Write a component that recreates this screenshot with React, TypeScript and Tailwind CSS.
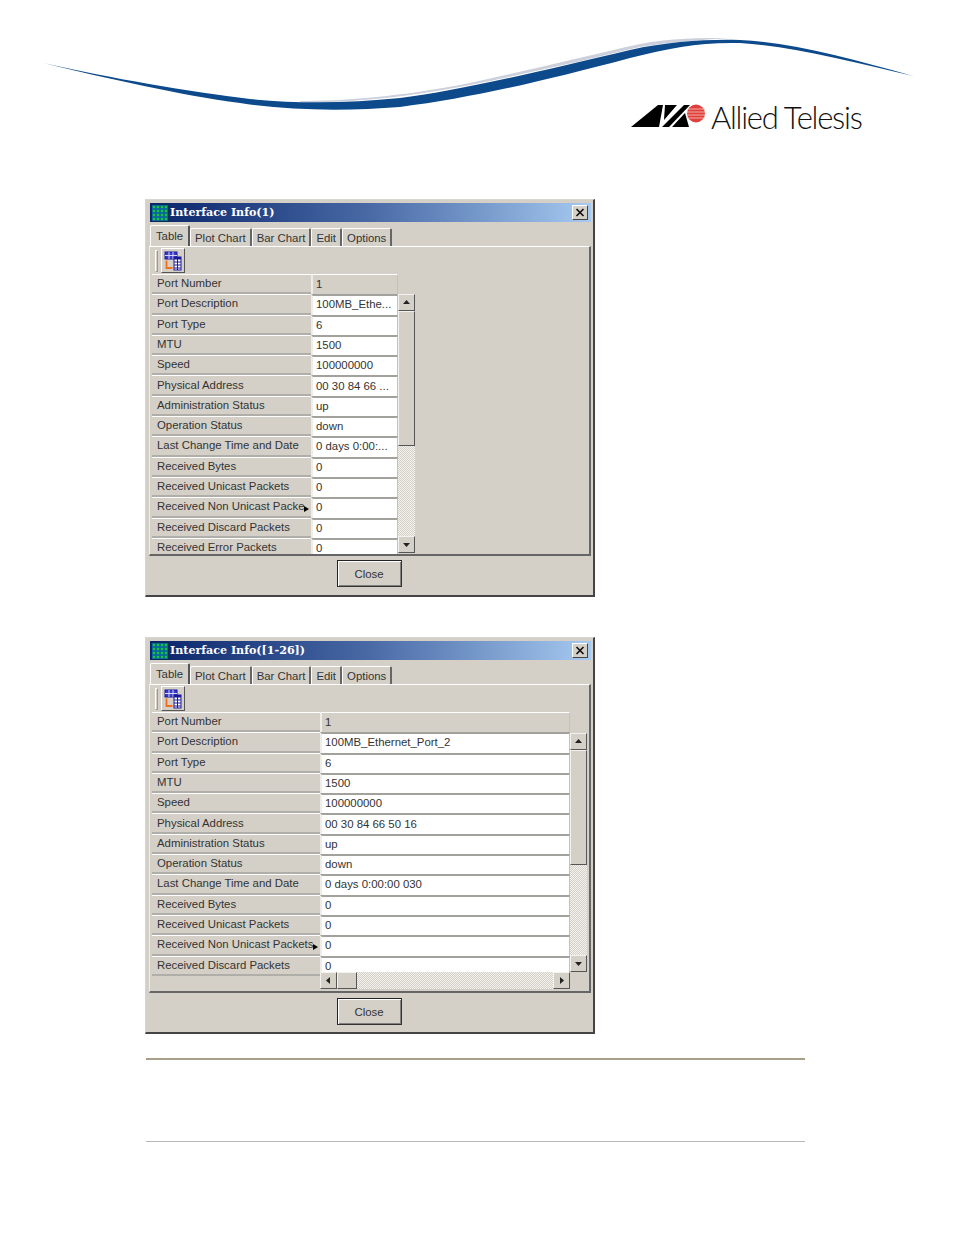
import React from "react";

const rows: [string, string, string][] = [
  ["Port Number", "1", "1"],
  ["Port Description", "100MB_Ethe...", "100MB_Ethernet_Port_2"],
  ["Port Type", "6", "6"],
  ["MTU", "1500", "1500"],
  ["Speed", "100000000", "100000000"],
  ["Physical Address", "00 30 84 66 ...", "00 30 84 66 50 16"],
  ["Administration Status", "up", "up"],
  ["Operation Status", "down", "down"],
  ["Last Change Time and Date", "0 days 0:00:...", "0 days 0:00:00 030"],
  ["Received Bytes", "0", "0"],
  ["Received Unicast Packets", "0", "0"],
  ["Received Non Unicast Packe", "0", "0"],
  ["Received Discard Packets", "0", "0"],
  ["Received Error Packets", "0", "0"],
];

function GridIcon() {
  return (
    <svg width="18" height="18" viewBox="0 0 18 18" className="shrink-0">
      <rect width="18" height="18" fill="#0b5fc4" />
      {[2, 6, 10, 14].map((v) => (
        <g key={v}>
          <rect x={v} y="0" width="2" height="18" fill="#0a7a66" />
          <rect x="0" y={v} width="18" height="2" fill="#0a7a66" />
        </g>
      ))}
      {[2, 6, 10, 14].map((a) =>
        [2, 6, 10, 14].map((b) => <rect key={`${a}-${b}`} x={a} y={b} width="2" height="2" fill="#16c060" />)
      )}
      <rect x="0.5" y="0.5" width="17" height="17" fill="none" stroke="#0a2a5a" />
    </svg>
  );
}

function TableIcon() {
  return (
    <svg width="18" height="20" viewBox="0 0 18 20">
      <rect x="1" y="1" width="12" height="7" fill="#3a3ac8" stroke="#1a1a9a" />
      <path d="M1 4.5h12M5 1v7M9 1v7" stroke="#d8d8f4" />
      <rect x="10" y="6" width="7" height="13" fill="#fff" stroke="#1a1a9a" />
      <rect x="10" y="6" width="7" height="2.5" fill="#1a1a9a" />
      <path d="M10 11h7M10 14h7M10 17h7M13.5 6v13" stroke="#1a1a9a" />
      <path d="M2.5 9.5v7.5h6" fill="none" stroke="#f07020" strokeWidth="1.8" />
    </svg>
  );
}

function ArrowBox({ dir }: { dir: "up" | "down" | "left" | "right" }) {
  const path = { up: "M4 7l3.5-4 3.5 4z", down: "M4 4l3.5 4 3.5-4z", left: "M9 2v7l-4-3.5z", right: "M6 2v7l4-3.5z" }[dir];
  return (
    <div className="w-[17px] h-[17px] shrink-0 bg-[#d4d0c8] border border-t-[#f4f2ee] border-l-[#f4f2ee] border-r-[#555] border-b-[#555] flex items-center justify-center">
      <svg width="15" height="11" viewBox="0 0 15 11"><path d={path} fill="#222" /></svg>
    </div>
  );
}

const dither = "bg-[repeating-conic-gradient(#f3f2ee_0%_25%,#d4d0c8_0%_50%)] bg-[length:2px_2px]";
const thumb = "bg-[#d4d0c8] border border-t-[#f4f2ee] border-l-[#f4f2ee] border-r-[#555] border-b-[#555]";

function Tab({ label, active }: { label: string; active?: boolean }) {
  return active ? (
    <div className="h-[21px] w-[40px] flex items-center justify-center border-l border-t border-white border-r-2 border-r-[#555] text-[#333] rounded-t-[2px] pt-[1px]">
      {label}
    </div>
  ) : (
    <div className="h-[18px] px-[4px] flex items-center border-l border-t border-white border-r-2 border-r-[#666] text-[#333] whitespace-nowrap rounded-t-[2px] pt-[2px]">
      {label}
    </div>
  );
}

function Row({ label, value, first, labelW, valueW, arrow }: { label: string; value: string; first?: boolean; labelW: string; valueW: string; arrow?: boolean }) {
  return (
    <div className="flex shrink-0 h-[20.3px]">
      <div className={`relative ${labelW} shrink-0 border-t border-white border-b-2 border-b-[#b0aea8] pl-[5px] flex items-center text-[#333] whitespace-nowrap overflow-hidden`}>
        {label}
        {arrow && <span className="absolute right-[2px] bottom-[4px] w-0 h-0 border-y-[3px] border-y-transparent border-l-[5px] border-l-black" />}
      </div>
      <div className={`${valueW} shrink-0 ${first ? "bg-[#d4d0c8] border-t border-t-white" : "bg-white border-t-2 border-t-[#a3a19c] pb-[1px]"} border-l-2 border-l-[#efede8] border-r border-r-[#c4c2bc] pl-[3px] flex items-center text-[#333] whitespace-nowrap overflow-hidden`}>
        {value}
      </div>
    </div>
  );
}

function Dialog({ title, wide }: { title: string; wide?: boolean }) {
  const data = wide
    ? rows.slice(0, 13).map((r, i) => [i === 11 ? "Received Non Unicast Packets" : r[0], r[2]])
    : rows.map((r) => [r[0], r[1]]);
  return (
    <div className={`w-[450px] ${wide ? "h-[397px]" : "h-[398px]"} bg-[#d4d0c8] border border-[#d8d6d0] border-r-2 border-r-[#444] border-b-2 border-b-[#444] pl-[3px] pt-[3px] pr-[2px] pb-[3px] flex flex-col text-[11.4px] font-['Liberation_Sans',Arial,sans-serif]`}>
      <div className="h-[19px] shrink-0 ml-[1px] bg-gradient-to-r from-[#0a246a] via-[#4a6aa6] to-[#a6caf0] flex items-center pl-[1px] pr-[3px]">
        <GridIcon />
        <span className="ml-[1px] pt-[1px] text-white font-bold text-[11.1px] font-['DejaVu_Serif',serif] whitespace-nowrap">{title}</span>
        <div className="ml-auto w-[16px] h-[15px] bg-[#d4d0c8] border border-t-white border-l-white border-r-[#444] border-b-[#444] flex items-center justify-center">
          <svg width="10" height="9" viewBox="0 0 10 9"><path d="M1.5 1l7 7M8.5 1l-7 7" stroke="#111" strokeWidth="1.7" /></svg>
        </div>
      </div>
      <div className="h-[24px] shrink-0 flex items-end pl-[1px]">
        <Tab label="Table" active />
        <Tab label="Plot Chart" />
        <Tab label="Bar Chart" />
        <Tab label="Edit" />
        <Tab label="Options" />
      </div>
      <div className="flex-1 min-h-0 flex flex-col border-t border-white border-r-2 border-r-[#666] border-b-2 border-b-[#666] border-l border-l-[#efede8] pl-[2px]">
        <div className="h-[27px] shrink-0 flex items-center pl-[3px]">
          <div className="w-[3px] h-[22px] border border-[#999] border-l-white border-t-white mr-[3px]" />
          <div className="w-[24px] h-[25px] border border-t-white border-l-white border-r-[#555] border-b-[#555] flex items-center justify-center">
            <TableIcon />
          </div>
        </div>
        {wide ? (
          <div className="relative h-[279px] overflow-hidden">
            {data.map((r, i) => (
              <Row key={r[0]} label={r[0]} value={r[1]} first={i === 0} labelW="w-[168px]" valueW="w-[250px]" arrow={i === 11} />
            ))}
            <div className="absolute left-[418px] top-[21px] w-[17px] h-[239px] flex flex-col">
              <ArrowBox dir="up" />
              <div className={`h-[115px] ${thumb}`} />
              <div className={`flex-1 ${dither}`} />
              <ArrowBox dir="down" />
            </div>
            <div className="absolute left-[168px] top-[260px] w-[250px] h-[17px] flex">
              <ArrowBox dir="left" />
              <div className={`w-[20px] h-[17px] ${thumb}`} />
              <div className={`flex-1 ${dither}`} />
              <ArrowBox dir="right" />
            </div>
          </div>
        ) : (
          <div className="relative h-[280px] overflow-hidden">
            {data.map((r, i) => (
              <Row key={r[0]} label={r[0]} value={r[1]} first={i === 0} labelW="w-[159px]" valueW="w-[87px]" arrow={i === 11} />
            ))}
            <div className="absolute left-[246px] top-[20px] w-[17px] h-[259px] flex flex-col">
              <ArrowBox dir="up" />
              <div className={`h-[135px] ${thumb}`} />
              <div className={`flex-1 ${dither}`} />
              <ArrowBox dir="down" />
            </div>
          </div>
        )}
      </div>
      <div className={`h-[36px] shrink-0 flex items-start justify-center ${wide ? "pt-[5px]" : "pt-[4px]"} pr-[2px]`}>
        <div className="w-[65px] h-[27px] pt-[2px] border border-t-[#222] border-l-[#222] border-r-[#333] border-b-[#333] shadow-[inset_1px_1px_0_#fff,inset_-1px_-1px_0_#808080] flex items-center justify-center text-[#333]">
          Close
        </div>
      </div>
    </div>
  );
}

export default function App() {
  return (
    <div className="w-[954px] h-[1235px] bg-white overflow-hidden">
      <div className="relative h-[199px]">
        <svg width="954" height="140" viewBox="0 0 954 140" className="absolute left-0 top-0">
          <path d="M300 101C340 101 400 97 470 83C530 70 590 55 640 44C670 38 700 38 730 38C700 40 670 42 640 47C590 59 530 73 470 85C400 99 340 103 300 102Z" fill="#ccd0dc" />
          <path d="M43 63C110 78 190 92 250 99C300 104 350 103 400 98C450 92 530 74 630 50C670 41 710 39 740 40C790 42 850 58 913 76C850 61 790 46 740 43C700 42 670 48 630 58C540 82 470 98 400 107C350 111 290 111 240 103C180 95 110 79 43 63Z" fill="#0d4a8c" />
        </svg>
        <svg width="76" height="26" viewBox="0 0 76 26" className="absolute left-[631px] top-[103px]">
          <path d="M0 24L27 2h5L28 24z" fill="#000" />
          <path d="M34 2h12L33 17z" fill="#000" />
          <path d="M31 24L53 2h6L38 24z" fill="#000" />
          <path d="M41 24L54 10l4 14z" fill="#000" />
          <circle cx="65" cy="10.5" r="9" fill="#e0403c" />
          <path d="M56 6h18M56 9h18M56 12h18M56 15h18" stroke="#f8c8c0" strokeWidth="0.8" />
        </svg>
        <div className="absolute left-[711px] top-[96px] text-[31px] leading-[42px] text-[#111] font-light font-['Lato',sans-serif] tracking-[-1.25px] whitespace-nowrap">
          Allied Telesis
        </div>
      </div>
      <div className="ml-[145px] flex flex-col">
        <Dialog title="Interface Info(1)" />
        <div className="h-[40px]" />
        <Dialog title="Interface Info([1-26])" wide />
        <div className="h-[24px]" />
        <div className="ml-[1px] w-[659px] h-[2px] bg-[#a89f88]" />
        <div className="h-[81px]" />
        <div className="ml-[1px] w-[659px] h-[1px] bg-[#b8b8b8]" />
      </div>
    </div>
  );
}
